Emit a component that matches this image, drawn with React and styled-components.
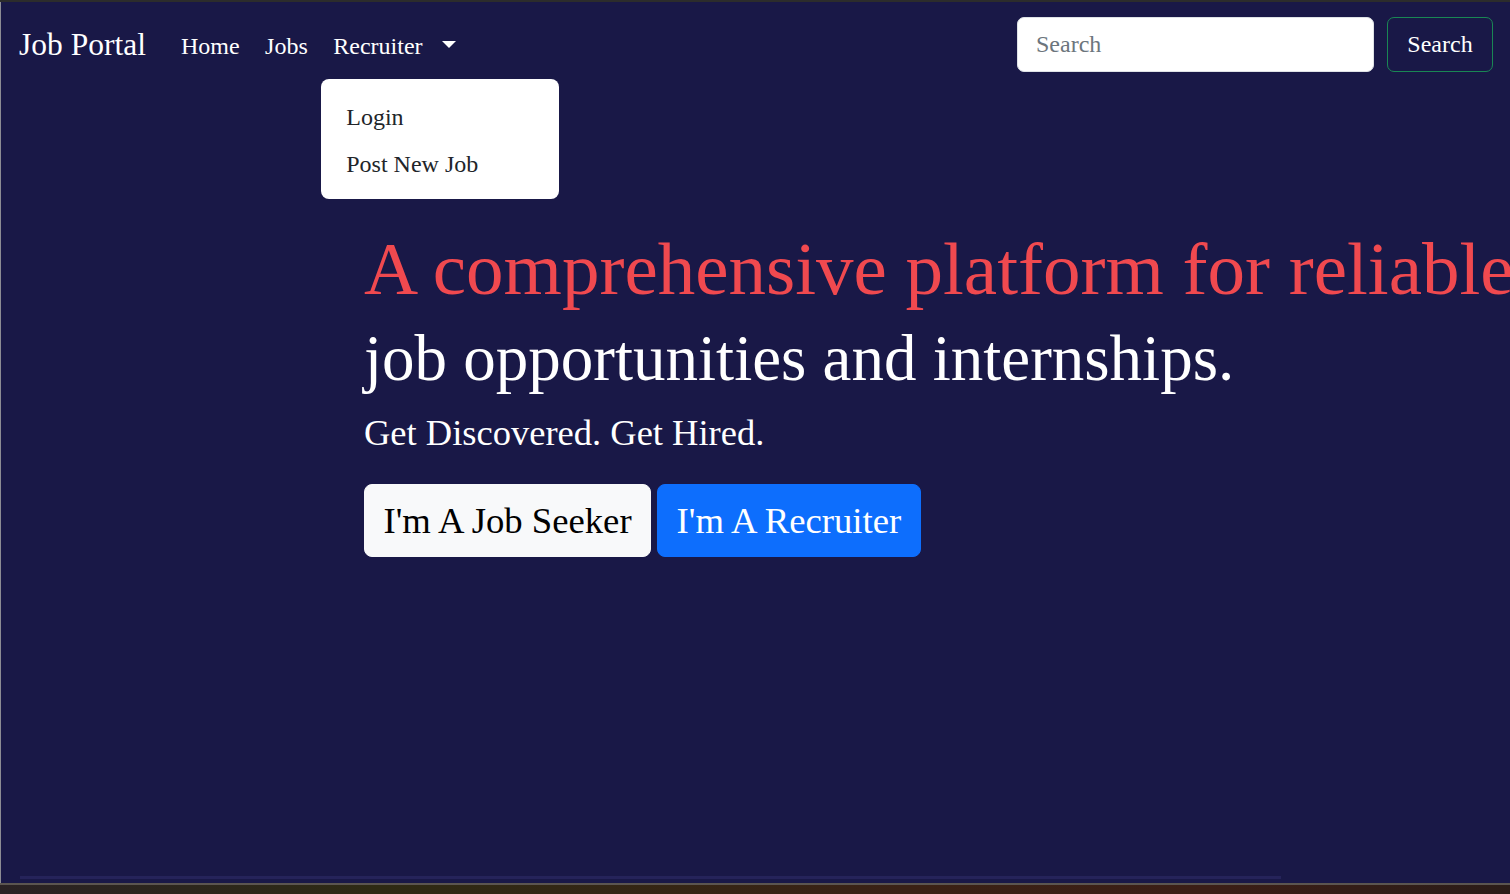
import React from 'react';
import styled, { createGlobalStyle } from 'styled-components';

const GlobalStyle = createGlobalStyle`
  html, body {
    margin: 0;
    padding: 0;
    height: 100%;
    overflow: hidden;
    background: #2b2b2b;
  }
  #root {
    height: 100%;
  }
  * {
    box-sizing: border-box;
  }
`;

const serif = `"Liberation Serif", "DejaVu Serif", serif`;

const Window = styled.div`
  height: 894px;
  display: flex;
  flex-direction: column;
  padding-top: 2px;
  background: #2c2c2c;
`;

const Page = styled.main`
  flex: 1;
  display: flex;
  flex-direction: column;
  background: #191847;
  border-left: 1px solid #8c8c94;
  overflow: hidden;
  font-family: ${serif};
  color: #fff;
`;

const Navbar = styled.nav`
  height: 86px;
  display: flex;
  align-items: center;
  padding: 0 17px 0 18px;
  flex-shrink: 0;
`;

const Brand = styled.a`
  font-size: 31.5px;
  line-height: 1.5;
  color: #fff;
  text-decoration: none;
  margin-right: 22px;
  white-space: nowrap;
`;

const NavList = styled.ul`
  display: flex;
  align-items: center;
  list-style: none;
  margin: 0;
  padding: 0;
  flex: 1;
`;

const NavItem = styled.li`
  position: relative;
`;

const NavLink = styled.a`
  display: flex;
  align-items: center;
  padding: 1px 12.5px 0 13px;
  font-size: 24px;
  line-height: 36px;
  color: #fff;
  text-decoration: none;
  white-space: nowrap;
`;

const Caret = styled.span`
  display: inline-block;
  margin-left: 19px;
  margin-top: -2px;
  border-top: 7px solid #fff;
  border-left: 7px solid transparent;
  border-right: 7px solid transparent;
`;

const Dropdown = styled.div`
  position: absolute;
  top: calc(100% + 15px);
  left: 1px;
  width: 238px;
  padding: 15px 0 11px;
  background: #fff;
  border-radius: 8px;
  z-index: 10;
`;

const DropdownItem = styled.a`
  display: block;
  padding: 5.5px 25px;
  font-size: 24px;
  line-height: 36px;
  color: #212529;
  text-decoration: none;
  white-space: nowrap;
`;

const SearchForm = styled.form`
  display: flex;
  align-items: center;
  gap: 13px;
  margin-top: -1px;
`;

const SearchInput = styled.input`
  width: 357px;
  height: 55px;
  padding: 0 18px;
  font-family: ${serif};
  font-size: 24px;
  color: #212529;
  background: #fff;
  border: 1px solid #dee2e6;
  border-radius: 7px;
  outline: none;

  &::placeholder {
    color: #6c757d;
  }
`;

const OutlineButton = styled.button`
  width: 106px;
  height: 55px;
  font-family: ${serif};
  font-size: 24px;
  color: #fff;
  background: transparent;
  border: 1px solid #198754;
  border-radius: 7px;
  cursor: pointer;
`;

const Hero = styled.section`
  padding: 136px 0 0 363px;
`;

const Headline = styled.h1`
  margin: 0 0 5px;
  font-size: 75px;
  font-weight: 400;
  line-height: 1.2;
  color: #f0494f;
  white-space: nowrap;
`;

const SubHeadline = styled.h2`
  margin: 0 0 14px;
  font-size: 65px;
  font-weight: 400;
  line-height: 1.2;
  color: #fff;
  white-space: nowrap;
`;

const Tagline = styled.p`
  margin: 0 0 29px;
  font-size: 36.5px;
  line-height: 1.2;
  color: #fff;
`;

const ButtonRow = styled.div`
  display: flex;
  gap: 6px;
`;

const HeroButton = styled.button`
  padding: 8px 18.5px;
  font-family: ${serif};
  font-size: 36.7px;
  line-height: 55px;
  border: 1px solid ${p => (p.$primary ? '#0d6efd' : '#f8f9fa')};
  border-radius: 8px;
  background: ${p => (p.$primary ? '#0d6efd' : '#f8f9fa')};
  color: ${p => (p.$primary ? '#fff' : '#000')};
  cursor: pointer;
  white-space: nowrap;
`;

const ScrollTrack = styled.div`
  margin: auto 0 4px 19px;
  width: 1261px;
  height: 3px;
  background: #25235a;
  flex-shrink: 0;
`;

const Taskbar = styled.div`
  height: 11px;
  flex-shrink: 0;
  border-top: 2px solid #5b5550;
  background: linear-gradient(90deg, #2a2224 0%, #2e2a14 25%, #3a2115 60%, #3b1e16 80%, #2b1c18 100%);
`;

export default function App() {
  return (
    <>
      <GlobalStyle />
      <Window>
        <Page>
          <Navbar>
            <Brand href="#">Job Portal</Brand>
            <NavList>
              <NavItem>
                <NavLink href="#">Home</NavLink>
              </NavItem>
              <NavItem>
                <NavLink href="#">Jobs</NavLink>
              </NavItem>
              <NavItem>
                <NavLink href="#">
                  Recruiter
                  <Caret />
                </NavLink>
                <Dropdown>
                  <DropdownItem href="#">Login</DropdownItem>
                  <DropdownItem href="#">Post New Job</DropdownItem>
                </Dropdown>
              </NavItem>
            </NavList>
            <SearchForm onSubmit={e => e.preventDefault()}>
              <SearchInput type="search" placeholder="Search" />
              <OutlineButton type="submit">Search</OutlineButton>
            </SearchForm>
          </Navbar>
          <Hero>
            <Headline>A comprehensive platform for reliable</Headline>
            <SubHeadline>job opportunities and internships.</SubHeadline>
            <Tagline>Get Discovered. Get Hired.</Tagline>
            <ButtonRow>
              <HeroButton>I'm A Job Seeker</HeroButton>
              <HeroButton $primary>I'm A Recruiter</HeroButton>
            </ButtonRow>
          </Hero>
          <ScrollTrack />
        </Page>
        <Taskbar />
      </Window>
    </>
  );
}
